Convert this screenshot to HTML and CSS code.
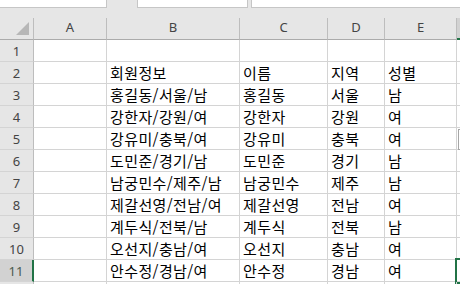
FILE: index.html
```html
<!DOCTYPE html>
<html lang="ko">
<head>
    <meta charset="UTF-8">
    <title>Sheet1</title>
    <link rel="stylesheet" href="styles.css">
</head>
<body>

<div class="toolbar">
    <div class="box name-box"></div>
    <div class="box fx-box"></div>
    <div class="box formula"></div>
</div>

<div class="sheet">
    <div class="hd corner"><span class="tri"></span></div>
    <div class="hd col">A</div>
    <div class="hd col">B</div>
    <div class="hd col">C</div>
    <div class="hd col">D</div>
    <div class="hd col">E</div>
    <div class="hd col sel-col"></div>

    <div class="hd row">1</div>
    <div class="c"></div><div class="c"></div><div class="c"></div><div class="c"></div><div class="c"></div><div class="c"></div>

    <div class="hd row">2</div>
    <div class="c"></div><div class="c">회원정보</div><div class="c">이름</div><div class="c">지역</div><div class="c">성별</div><div class="c"></div>

    <div class="hd row">3</div>
    <div class="c"></div><div class="c">홍길동/서울/남</div><div class="c">홍길동</div><div class="c">서울</div><div class="c">남</div><div class="c"></div>

    <div class="hd row">4</div>
    <div class="c"></div><div class="c">강한자/강원/여</div><div class="c">강한자</div><div class="c">강원</div><div class="c">여</div><div class="c"></div>

    <div class="hd row">5</div>
    <div class="c"></div><div class="c">강유미/충북/여</div><div class="c">강유미</div><div class="c">충북</div><div class="c">여</div><div class="c"></div>

    <div class="hd row">6</div>
    <div class="c"></div><div class="c">도민준/경기/남</div><div class="c">도민준</div><div class="c">경기</div><div class="c">남</div><div class="c"></div>

    <div class="hd row">7</div>
    <div class="c"></div><div class="c">남궁민수/제주/남</div><div class="c">남궁민수</div><div class="c">제주</div><div class="c">남</div><div class="c"></div>

    <div class="hd row">8</div>
    <div class="c"></div><div class="c">제갈선영/전남/여</div><div class="c">제갈선영</div><div class="c">전남</div><div class="c">여</div><div class="c"></div>

    <div class="hd row">9</div>
    <div class="c"></div><div class="c">계두식/전북/남</div><div class="c">계두식</div><div class="c">전북</div><div class="c">남</div><div class="c"></div>

    <div class="hd row">10</div>
    <div class="c"></div><div class="c">오선지/충남/여</div><div class="c">오선지</div><div class="c">충남</div><div class="c">여</div><div class="c"></div>

    <div class="hd row sel-row">11</div>
    <div class="c"></div><div class="c">안수정/경남/여</div><div class="c">안수정</div><div class="c">경남</div><div class="c">여</div><div class="c active"></div>

    <div class="hd row last"></div>
    <div class="c last"></div><div class="c last"></div><div class="c last"></div><div class="c last"></div><div class="c last"></div><div class="c last"></div>

    <div class="quick"></div>
</div>

</body>
</html>
```

FILE: styles.css
```css
body {
    margin: 0;
    background-color: #e6e6e6;
    overflow: hidden;
    font-family: "Noto Sans CJK KR", "Noto Sans", sans-serif;
}
.toolbar {
    display: flex;
    height: 18px;
    background-color: #e6e6e6;
}
.box {
    height: 8px;
    box-sizing: border-box;
    background-color: #fff;
    border: 1px solid #c6c6c6;
    border-top: none;
}
.name-box {
    width: 107px;
    border-left: none;
}
.fx-box {
    width: 111px;
    margin-left: 30px;
}
.formula {
    flex: 1;
    margin-left: 3px;
    border-right: none;
}
.sheet {
    position: relative;
    display: grid;
    grid-template-columns: 34px 73px 133px 88px 57px 72px 1fr;
    grid-template-rows: 22px repeat(11, 22px) 2px;
    background-color: #fff;
}
.hd {
    box-sizing: border-box;
    background-color: #e6e6e6;
    color: #444;
    font-family: "Noto Sans", "Open Sans", sans-serif;
    font-size: 13px;
    display: flex;
    align-items: center;
    justify-content: center;
}
.col {
    border-right: 1px solid #bdbdbd;
    border-bottom: 1px solid #ababab;
    padding-bottom: 3px;
}
.corner {
    position: relative;
    border-right: 1px solid #bdbdbd;
    border-bottom: 1px solid #ababab;
}
.tri {
    position: absolute;
    left: 16px;
    top: 4px;
    width: 0;
    height: 0;
    border-left: 13px solid transparent;
    border-bottom: 13px solid #b7b7b7;
}
.row {
    border-right: 1px solid #bdbdbd;
    border-bottom: 1px solid #d4d4d4;
    padding-top: 1px;
}
.sel-col {
    background-color: #d2d2d2;
    border-right: none;
    border-bottom: 2px solid #217346;
}
.sel-row {
    background-color: #d2d2d2;
    border-right: 2px solid #217346;
    color: #4a5a4e;
}
.c {
    box-sizing: border-box;
    border-right: 1px solid #d4d4d4;
    border-bottom: 1px solid #d4d4d4;
    padding: 0 3px;
    font-size: 15px;
    letter-spacing: 0.4px;
    color: #000;
    white-space: nowrap;
    overflow: hidden;
    line-height: 21px;
}
.last {
    border-bottom: none;
}
.active {
    outline: 2px solid #217346;
    outline-offset: 0;
    overflow: visible;
}
.quick {
    position: absolute;
    left: 458px;
    top: 111px;
    width: 8px;
    height: 19px;
    border: 1px solid #a6a6a6;
    background-color: #fff;
}
```
